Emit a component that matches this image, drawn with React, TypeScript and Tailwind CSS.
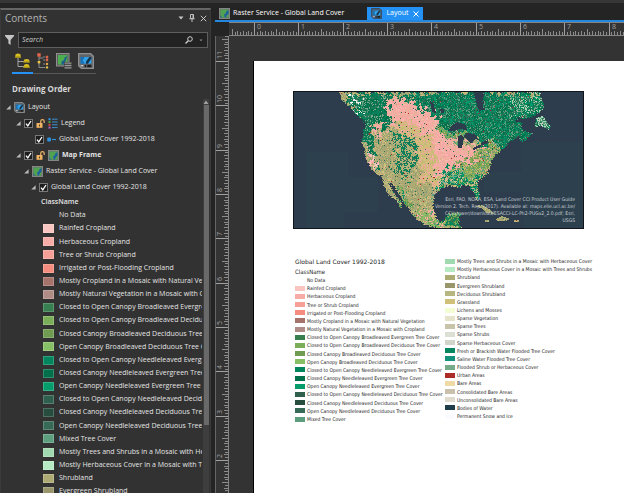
import { useMemo, type ReactNode } from "react";

type Pt = [number, number];
type Zone = { shape: Pt[]; colors: string[] };

/* ---------- land cover classes ---------- */

const classes: { name: string; swatch: string }[] = [
  { name: "No Data", swatch: "" },
  { name: "Rainfed Cropland", swatch: "bg-[#f9c5c1]" },
  { name: "Herbaceous Cropland", swatch: "bg-[#f7aca7]" },
  { name: "Tree or Shrub Cropland", swatch: "bg-[#f69f97]" },
  { name: "Irrigated or Post-Flooding Cropland", swatch: "bg-[#f48c7f]" },
  { name: "Mostly Cropland in a Mosaic with Natural Vegetation", swatch: "bg-[#a5736b]" },
  { name: "Mostly Natural Vegetation in a Mosaic with Cropland", swatch: "bg-[#b08c86]" },
  { name: "Closed to Open Canopy Broadleaved Evergreen Tree Cover", swatch: "bg-[#377e50]" },
  { name: "Closed to Open Canopy Broadleaved Deciduous Tree Cover", swatch: "bg-[#7bae58]" },
  { name: "Closed Canopy Broadleaved Deciduous Tree Cover", swatch: "bg-[#6f9c51]" },
  { name: "Open Canopy Broadleaved Deciduous Tree Cover", swatch: "bg-[#87bf67]" },
  { name: "Closed to Open Canopy Needleleaved Evergreen Tree Cover", swatch: "bg-[#03865d]" },
  { name: "Closed Canopy Needleleaved Evergreen Tree Cover", swatch: "bg-[#03704c]" },
  { name: "Open Canopy Needleleaved Evergreen Tree Cover", swatch: "bg-[#059c6c]" },
  { name: "Closed to Open Canopy Needleleaved Deciduous Tree Cover", swatch: "bg-[#2f604e]" },
  { name: "Closed Canopy Needleleaved Deciduous Tree Cover", swatch: "bg-[#264d3e]" },
  { name: "Open Canopy Needleleaved Deciduous Tree Cover", swatch: "bg-[#376b58]" },
  { name: "Mixed Tree Cover", swatch: "bg-[#5d9e7e]" },
  { name: "Mostly Trees and Shrubs in a Mosaic with Herbaceous Cover", swatch: "bg-[#a0d8b0]" },
  { name: "Mostly Herbaceous Cover in a Mosaic with Trees and Shrubs", swatch: "bg-[#b5eac3]" },
  { name: "Shrubland", swatch: "bg-[#adab74]" },
  { name: "Evergreen Shrubland", swatch: "bg-[#98966a]" },
  { name: "Deciduous Shrubland", swatch: "bg-[#b7b680]" },
  { name: "Grassland", swatch: "bg-[#d1c079]" },
  { name: "Lichens and Mosses", swatch: "bg-[#f3fdd3]" },
  { name: "Sparse Vegetation", swatch: "bg-[#e6e3cb]" },
  { name: "Sparse Trees", swatch: "bg-[#c8c4aa]" },
  { name: "Sparse Shrubs", swatch: "bg-[#dce0d4]" },
  { name: "Sparse Herbaceous Cover", swatch: "bg-[#d2d6ca]" },
  { name: "Fresh or Brackish Water Flooded Tree Cover", swatch: "bg-[#07865f]" },
  { name: "Saline Water Flooded Tree Cover", swatch: "bg-[#15927c]" },
  { name: "Flooded Shrub or Herbaceous Cover", swatch: "bg-[#77aa89]" },
  { name: "Urban Areas", swatch: "bg-[#ad2c28]" },
  { name: "Bare Areas", swatch: "bg-[#efd9a5]" },
  { name: "Consolidated Bare Areas", swatch: "bg-[#c9c1ae]" },
  { name: "Unconsolidated Bare Areas", swatch: "bg-[#dfdccf]" },
  { name: "Bodies of Water", swatch: "bg-[#1f3c4b]" },
  { name: "Permanent Snow and Ice", swatch: "bg-[#fafaff]" },
];

/* ---------- map drawing ---------- */

const mainland: Pt[] = [
  [45, 0], [47, 7], [55, 14], [63, 24], [72, 31], [69, 41], [68, 50], [70, 57], [72, 67], [79, 80], [87, 84],
  [90, 92], [95, 104], [101, 107], [107, 116], [108, 112], [102, 104], [98, 96], [94, 90], [97, 91], [103, 99],
  [110, 111], [118, 121], [120, 125], [128, 131], [138, 135], [150, 137], [167, 138], [167, 133], [164, 132],
  [167, 123], [164, 120], [154, 122], [149, 130], [143, 128], [139, 117], [140, 104], [146, 97], [155, 93], [165, 96],
  [170, 93], [175, 94], [179, 100], [183, 109], [186, 106], [184, 97], [184, 89], [194, 81], [197, 72],
  [200, 64], [210, 56], [217, 49], [225, 44], [226, 49], [232, 48], [239, 41], [232, 40], [227, 36], [228, 31],
  [220, 29], [224, 26], [232, 27], [242, 23], [249, 17], [250, 11], [245, 0], [190, 0], [189, 9], [190, 17],
  [185, 20], [182, 12], [180, 0],
];

const islands: Pt[][] = [
  [[242, 26], [249, 24], [253, 30], [257, 34], [255, 38], [247, 34], [241, 35]],
  [[181, 114], [188, 113], [195, 117], [201, 122], [193, 121], [187, 116]],
  [[202, 127], [208, 124], [216, 127], [212, 129], [203, 129]],
  [[191, 128], [195, 128], [195, 130], [191, 130]],
  [[220, 128], [225, 128], [225, 130], [220, 130]],
];

const lakes: Pt[][] = [
  [[154, 39], [158, 33], [164, 30], [172, 33], [173, 38], [165, 37], [160, 39]],
  [[164, 44], [168, 43], [170, 46], [168, 56], [164, 56]],
  [[173, 41], [181, 42], [185, 48], [181, 47], [177, 52], [174, 48], [170, 44]],
  [[178, 57], [183, 54], [188, 52], [187, 55], [180, 58]],
  [[187, 51], [194, 48], [195, 51], [189, 53]],
  [[136, 9], [139, 10], [142, 21], [138, 20]],
  [[146, 17], [150, 17], [150, 21], [147, 21]],
];

const baseColors = ["#aeab74", "#a9a671", "#aeab74", "#a3a06d", "#b7b680", "#d1c079", "#b9a878", "#8aa074"];

const zones: Zone[] = [
  { shape: [[45, 0], [100, 0], [92, 8], [100, 32], [92, 38], [82, 32], [78, 56], [86, 76], [82, 80], [74, 62], [66, 40], [62, 22]], colors: ["#03704c", "#03865d", "#0e7a58", "#2f7a5c", "#77aa89", "#03704c"] },
  { shape: [[55, 3], [60, 3], [75, 20], [72, 23], [62, 14]], colors: ["#03704c", "#ffffff", "#dfe9e0", "#03865d", "#5d9e7e"] },
  { shape: [[72, 60], [76, 60], [84, 75], [80, 80], [74, 70]], colors: ["#f7aca7", "#f9c5c1"] },
  { shape: [[78, 33], [86, 30], [92, 38], [84, 44], [78, 42]], colors: ["#f7aca7", "#d8b792", "#f7aca7", "#aeab74"] },
  { shape: [[100, 40], [120, 38], [122, 70], [114, 86], [98, 78], [104, 62], [98, 50]], colors: ["#03865d", "#aeab74", "#2f7a5c", "#b7b680", "#aeab74", "#0e7a58"] },
  { shape: [[98, 88], [106, 92], [120, 114], [118, 122], [108, 110]], colors: ["#6f9c51", "#7bae58", "#0f8c68", "#aeab74"] },
  { shape: [[118, 118], [136, 118], [146, 132], [168, 138], [138, 137]], colors: ["#7bae58", "#f7aca7", "#aeab74", "#87bf67"] },
  { shape: [[140, 120], [170, 114], [170, 138], [148, 138]], colors: ["#377e50", "#03865d", "#7bae58"] },
  { shape: [[102, 0], [260, 0], [260, 50], [200, 62], [180, 46], [152, 46], [144, 28], [120, 10], [102, 5]], colors: ["#03704c", "#03865d", "#0b7c58", "#059c6c", "#2f6f57", "#03704c", "#5d9e7e"] },
  { shape: [[212, 2], [250, 0], [250, 22], [220, 24]], colors: ["#03704c", "#059c6c", "#a9cfae", "#2f7a5c", "#77aa89", "#03865d"] },
  { shape: [[240, 22], [260, 22], [260, 40], [240, 38]], colors: ["#5d9e7e", "#b9d3bb", "#2f7a5c", "#a0d8b0"] },
  { shape: [[144, 32], [156, 40], [172, 38], [178, 48], [150, 50], [144, 42]], colors: ["#7bae58", "#6f9c51", "#d1a58b", "#5d9e7e"] },
  { shape: [[168, 58], [196, 50], [208, 54], [200, 66], [196, 80], [184, 90], [144, 96], [142, 76], [160, 70]], colors: ["#7bae58", "#6f9c51", "#aeb465", "#87a857", "#5d9e7e", "#d6ac85"] },
  { shape: [[142, 78], [160, 74], [176, 84], [188, 82], [186, 110], [170, 95], [142, 96]], colors: ["#059c6c", "#03865d", "#77aa89", "#d8b792", "#7bae58", "#0e7a58"] },
  { shape: [[92, 6], [104, 5], [122, 12], [142, 25], [146, 40], [154, 47], [166, 49], [178, 56], [196, 50], [180, 62], [170, 70], [158, 73], [148, 78], [144, 92], [128, 86], [126, 66], [122, 48], [106, 38], [97, 28]], colors: ["#f7aca7", "#f7aca7", "#f3a59e", "#f9b9b3", "#f7aca7", "#e3b294"] },
  { shape: [[100, 33], [108, 30], [124, 34], [140, 50], [141, 76], [144, 94], [128, 90], [122, 70], [121, 48]], colors: ["#d1c079", "#d8b37f", "#f0aba0", "#c6b877"] },
  { shape: [[137, 102], [142, 100], [142, 118], [148, 129], [142, 131], [136, 118]], colors: ["#f7aca7", "#d1c079", "#aeab74", "#5d9e7e"] },
];

function inside(x: number, y: number, shape: Pt[]) {
  let hit = false;
  for (let i = 0, j = shape.length - 1; i < shape.length; j = i++) {
    const [xi, yi] = shape[i];
    const [xj, yj] = shape[j];
    if (yi > y !== yj > y && x < ((xj - xi) * (y - yi)) / (yj - yi) + xi) hit = !hit;
  }
  return hit;
}

function hash(x: number, y: number, seed = 0) {
  let h = Math.imul(x + 374, 668265263) ^ Math.imul(y + 91, 2246822519) ^ Math.imul(seed + 7, 3266489917);
  h = Math.imul(h ^ (h >>> 13), 1274126177);
  return ((h ^ (h >>> 16)) >>> 0) / 4294967296;
}

function clump(x: number, y: number, size: number, seed: number) {
  const gx = Math.floor(x / size);
  const gy = Math.floor(y / size);
  const fx = x / size - gx;
  const fy = y / size - gy;
  const top = hash(gx, gy, seed) * (1 - fx) + hash(gx + 1, gy, seed) * fx;
  const low = hash(gx, gy + 1, seed) * (1 - fx) + hash(gx + 1, gy + 1, seed) * fx;
  return top * (1 - fy) + low * fy;
}

function buildRaster(width: number, height: number) {
  const cells = new Map<string, string>();
  for (let y = 0; y < height; y++) {
    for (let x = 0; x < width; x++) {
      const wx = x + 0.5 + (hash(x, y, 1) - 0.5) * 2;
      const wy = y + 0.5 + (hash(x, y, 2) - 0.5) * 2;
      const land = inside(wx, wy, mainland) || islands.some((s) => inside(x + 0.5, y + 0.5, s));
      if (!land || lakes.some((s) => inside(x + 0.5, y + 0.5, s))) continue;
      const zx = x + (clump(x, y, 3, 3) - 0.5) * 14 + (hash(x, y, 9) - 0.5) * 3;
      const zy = y + (clump(x, y, 3, 4) - 0.5) * 14 + (hash(x, y, 10) - 0.5) * 3;
      let colors = baseColors;
      for (const zone of zones) if (inside(zx, zy, zone.shape)) colors = zone.colors;
      const mix = (clump(x, y, 3, 5) * 1.6 + hash(x, y, 6) * 0.4) % 1;
      let color = colors[Math.floor(mix * colors.length)];
      const speck = hash(x, y, 8);
      if (speck > 0.996) color = "#ad2c28";
      else if (speck > 0.975) color = "#3b6a57";
      cells.set(color, (cells.get(color) ?? "") + `M${x} ${y}h1v1h-1z`);
    }
  }
  return [...cells];
}

function LandCoverMap() {
  const raster = useMemo(() => buildRaster(289, 136), []);
  return (
    <svg viewBox="0 0 289 136" className="block w-full" role="img" aria-label="Land cover of North America">
      <rect width="289" height="136" fill="#2d3d4e" />
      <path d="M12 60h42v25h30v35H50v17H12z M226 50h64v85h-60z M190 80h40v20h-40z" fill="#2b434e" opacity="0.6" />
      {raster.map(([color, d]) => (
        <path key={color} d={d} fill={color} shapeRendering="crispEdges" />
      ))}
    </svg>
  );
}

/* ---------- icons ---------- */

function Caret() {
  return (
    <svg viewBox="0 0 5 5" className="size-[5px] shrink-0">
      <path d="M4.6 0.2V4.6H0.2z" fill="#b9b9b9" />
    </svg>
  );
}

function LayoutIcon({ className = "size-[11px]", active = false }: { className?: string; active?: boolean }) {
  return (
    <svg viewBox="0 0 12 12" className={className + " shrink-0"}>
      <path d="M0.5 0.5H9.5L11.5 2.5V11.5H2.5L0.5 9.5z" fill={active ? "#47617a" : "#5f6468"} stroke={active ? "#3a4a5a" : "#8f8f8f"} />
      <path d="M2 3h8v5H2z" fill="#2fa0ea" />
      <path d="M2 3h3L3.5 5.5 5 8H2z" fill="#1b6fb0" />
      <path d="M8.6 3L6 6.4V8h1.4L10 4.2V3z" fill="#16334a" />
      <path d="M5 9h1.2v1.6H5zM7 8.8h3v1.8H7z" fill="#1c1c1c" />
      <path d="M2 9h2v1H2z" fill="#cfcfcf" />
    </svg>
  );
}

function MapIcon({ className = "size-[11px]" }: { className?: string }) {
  return (
    <svg viewBox="0 0 12 12" className={className + " shrink-0"}>
      <rect x="0.5" y="0.5" width="11" height="11" fill="#6d6d6d" stroke="#8b8b8b" />
      <rect x="1.6" y="1.6" width="8.8" height="8.8" fill="#4fa351" />
      <path d="M10.4 2.4L8.2 3.2 7.6 5.4 5.6 7 6.2 10.4H7.6L8.6 7.6 10.4 6.2z" fill="#1e5fa0" />
      <path d="M1.6 10.4V7.6L3.4 10.4z" fill="#1e5fa0" />
    </svg>
  );
}

function LockIcon() {
  return (
    <svg viewBox="0 0 9 9" className="size-[9px] shrink-0" fill="none">
      <path d="M4.7 4V2.4a1.7 1.7 0 0 1 3.5 0V4" stroke="#f0b264" strokeWidth="1.2" />
      <rect x="0.5" y="4" width="6" height="4.8" fill="#f0b264" />
      <rect x="3" y="5.6" width="1" height="1.8" fill="#4a3a20" />
    </svg>
  );
}

function LegendIcon() {
  return (
    <svg viewBox="0 0 10 11" className="h-[11px] w-[10px] shrink-0">
      <rect x="0.5" y="0.2" width="2" height="2" fill="#2f9be8" />
      <rect x="0.5" y="3" width="2" height="2" fill="#43a047" />
      <rect x="0.5" y="5.8" width="2" height="2" fill="#e0483c" />
      <rect x="0.5" y="8.6" width="2" height="2" fill="#b25ccf" />
      <path d="M4 1.2h5.6M4 4h5.6M4 6.8h5.6M4 9.6h5.6" stroke="#3d8fd0" strokeWidth="1" />
    </svg>
  );
}

function LegendItemIcon() {
  return (
    <svg viewBox="0 0 9 5" className="h-[5px] w-[9px] shrink-0">
      <rect x="0.2" y="0.6" width="3.8" height="3.8" rx="1" fill="#2f8fd8" />
      <path d="M5 2.5h4" stroke="#2f8fd8" strokeWidth="1.2" />
    </svg>
  );
}

function DrawingOrderIcon() {
  return (
    <svg viewBox="0 0 16 16" className="size-4" fill="none">
      <path d="M3 5v8.5h6M3 8.5h6" stroke="#a5a5a5" />
      <path d="M0.6 1.2q2.4-1.6 4.8 0l.6 3.6H0zM9.2 6.6q2.4-1.4 4.8 0l.8 3H8.4zM9.2 11.8q2.4-1.4 4.8 0l.8 3.2H8.4z" fill="#d5bd22" />
      <path d="M0 4h6M8.5 9h6.3M8.5 14.3h6.3" stroke="#8d7b10" strokeWidth="0.8" />
    </svg>
  );
}

function SourceIcon() {
  return (
    <svg viewBox="0 0 12 16" className="h-4 w-3" fill="none">
      <path d="M2 4v3M2 10v4.5h4M2 5h4" stroke="#8b8b8b" />
      <path d="M0.3 0.3h3.4v3.4H0.3zM8.8 2.8h2.4v2.4H8.8zM8.8 5.8h2.4v2.4H8.8z" fill="#e0664a" />
      <path d="M6 4h2M6 7h2M6 11h2M6 14.5h2" stroke="#8b8b8b" />
      <circle cx="2" cy="9" r="1.5" fill="#e9c64a" />
      <circle cx="10" cy="11" r="1.2" fill="#e9a84a" />
      <circle cx="10" cy="14.4" r="1.2" fill="#e9c64a" />
    </svg>
  );
}

function MapListIcon() {
  return (
    <svg viewBox="0 0 16 16" className="size-4">
      <rect x="0.5" y="0.5" width="12.5" height="12.5" fill="#5f5f5f" stroke="#8f8f8f" />
      <rect x="2" y="2" width="9.5" height="9.5" fill="#4cae4f" />
      <path d="M11.5 3L8.6 4.5 8 7 5.5 8.5V11.5H9L9.5 8z" fill="#1d5f8d" />
      <path d="M8 9h8v7H8z" fill="#323232" />
      <path d="M8.5 10.2h7M8.5 12.5h7M8.5 14.8h7" stroke="#9a9a9a" strokeWidth="1.3" />
    </svg>
  );
}

/* ---------- rulers ---------- */

const inch = 133 / 3;

function TopRuler() {
  const ticks = Array.from({ length: 160 }, (_, i) => i - 8).map((i) => ({ x: 25 + (i * inch) / 16, i }));
  return (
    <svg className="block h-3 w-full bg-[#343434]" aria-hidden="true">
      {ticks.map(({ x, i }) =>
        i % 16 === 0 ? (
          <g key={i}>
            <rect x={Math.round(x)} y="0" width="1" height="12" fill="#a0a0a0" />
            <text x={Math.round(x) + 3} y="6" className="fill-[#a0a0a0] font-['Open_Sans',sans-serif] text-[7px]">{i / 16}</text>
          </g>
        ) : (
          <rect key={i} x={Math.round(x)} y={i % 8 === 0 ? 6 : i % 2 === 0 ? 8 : 9} width="1" height="6" fill="#8c8c8c" />
        ),
      )}
    </svg>
  );
}

function SideRuler() {
  const ticks = Array.from({ length: 180 }, (_, i) => i - 9).map((i) => ({ y: 25 + (i * inch) / 16, i }));
  return (
    <svg className="w-3 shrink-0 bg-[#343434]" aria-hidden="true">
      {ticks.map(({ y, i }) =>
        i % 16 === 0 ? (
          <g key={i}>
            <rect x="0" y={Math.round(y)} width="12" height="1" fill="#a0a0a0" />
            <text transform={`translate(6 ${Math.round(y) - 2}) rotate(-90)`} className="fill-[#a0a0a0] font-['Open_Sans',sans-serif] text-[7px]">
              {11 - i / 16}
            </text>
          </g>
        ) : (
          <rect key={i} x={i % 8 === 0 ? 6 : i % 2 === 0 ? 8 : 9} y={Math.round(y)} width="6" height="1" fill="#8c8c8c" />
        ),
      )}
    </svg>
  );
}

/* ---------- contents pane ---------- */

function Check({ label }: { label: string }) {
  return (
    <span className="relative flex size-[9px] shrink-0">
      <input
        type="checkbox"
        defaultChecked
        aria-label={label}
        className="peer size-[9px] appearance-none border border-[#777] bg-[#1e1e1e]"
      />
      <svg viewBox="0 0 9 9" className="pointer-events-none absolute inset-0 hidden size-[9px] peer-checked:block" fill="none">
        <path d="M2 4.6L3.8 6.8 7 2" stroke="#fff" strokeWidth="1.3" />
      </svg>
    </span>
  );
}

function TreeRow({ indent, children }: { indent: string; children: ReactNode }) {
  return <li className={"flex h-4 items-center gap-[3px] whitespace-nowrap " + indent}>{children}</li>;
}

function ContentsPane() {
  return (
    <aside className="flex w-[211px] shrink-0 flex-col overflow-hidden border-x border-t-2 border-[#3a3a3a] border-t-[#666] bg-[#323232]">
      <header className="flex h-4 items-center gap-[5px] pr-[3px] pl-1">
        <h1 className="flex-1 text-[10px] leading-4 text-[#b4b4b4]">Contents</h1>
        <button aria-label="Pane options">
          <svg viewBox="0 0 6 4" className="h-1 w-[6px]"><path d="M0.5 0.5h5L3 3.5z" fill="#c8c8c8" /></svg>
        </button>
        <button aria-label="Pin">
          <svg viewBox="0 0 6 8" className="h-2 w-[6px]" fill="none" stroke="#c0c0c0"><path d="M1.5 0.5h3v4h-3zM0.3 4.8h5.4M3 5v3M4 0.5v4" /></svg>
        </button>
        <button aria-label="Close pane">
          <svg viewBox="0 0 7 7" className="size-[7px]" stroke="#c8c8c8"><path d="M0.8 0.8l5.4 5.4M6.2 0.8l-5.4 5.4" /></svg>
        </button>
      </header>

      <div className="mt-[6px] flex items-center gap-1 pr-[2px] pl-1">
        <svg viewBox="0 0 9 10" className="h-[10px] w-[9px] shrink-0"><path d="M0 0h9v1L5.6 5v5L3.4 8.5V5L0 1z" fill="#c4c4c4" /></svg>
        <div className="flex h-4 flex-1 items-center border border-[#5e5e5e] bg-[#222] pr-1 pl-[3px]">
          <input
            type="search"
            aria-label="Search"
            placeholder="Search"
            className="min-w-0 flex-1 bg-transparent text-[7px] italic outline-none placeholder:text-[#d0d0d0]"
          />
          <button aria-label="Run search" className="mr-[6px]">
            <svg viewBox="0 0 8 8" className="size-2" fill="none" stroke="#cfcfcf"><circle cx="5" cy="3" r="2.3" /><path d="M3.3 4.7L0.5 7.5" strokeWidth="1.3" /></svg>
          </button>
          <button aria-label="Search options">
            <svg viewBox="0 0 4 3" className="h-[3px] w-1"><path d="M0.5 0.5h3L2 2.2z" fill="#909090" /></svg>
          </button>
        </div>
      </div>

      <div className="mt-[5px] ml-[11px] flex w-[84px] justify-between border-b border-[#585858] pr-[2px] pb-1 pl-[3px]">
        <button aria-label="List by drawing order" className="relative">
          <DrawingOrderIcon />
          <span className="absolute -bottom-[5px] -left-[3px] h-[2px] w-[21px] bg-[#2492f5]" />
        </button>
        <button aria-label="List by data source"><SourceIcon /></button>
        <button aria-label="List by map frames"><MapListIcon /></button>
        <button aria-label="List by element type"><LayoutIcon className="size-4" /></button>
      </div>

      <h2 className="mt-[9px] ml-[11px] text-[8px] leading-3 font-bold text-[#d8d8d8]">Drawing Order</h2>

      <div className="mt-1 flex min-h-0 flex-1">
        <ul className="min-w-0 flex-1 overflow-hidden text-[7px] text-[#e4e4e4]">
          <TreeRow indent="pl-[5px]"><Caret /><LayoutIcon />Layout</TreeRow>
          <TreeRow indent="pl-[15px]"><Caret /><Check label="Legend" /><LockIcon /><LegendIcon />Legend</TreeRow>
          <TreeRow indent="pl-[34px]"><Check label="Legend item" /><LegendItemIcon />Global Land Cover 1992-2018</TreeRow>
          <TreeRow indent="pl-[15px]"><Caret /><Check label="Map Frame" /><LockIcon /><MapIcon /><b>Map Frame</b></TreeRow>
          <TreeRow indent="pl-[23px]"><Caret /><MapIcon />Raster Service - Global Land Cover</TreeRow>
          <TreeRow indent="pl-[30px]"><Caret /><Check label="Global Land Cover 1992-2018" />Global Land Cover 1992-2018</TreeRow>
          <li className="h-[14px] pl-10 leading-[13px] font-semibold">ClassName</li>
          <li>
            <ul className="flex h-[289px] flex-col">
              {classes.slice(0, 22).map((c) => (
                <li key={c.name} className="flex flex-1 items-center gap-[5px] pl-[42px] whitespace-nowrap">
                  <span className={"h-[9px] w-[11px] shrink-0 " + (c.swatch && "border border-white/20 ") + c.swatch} />
                  {c.name}
                </li>
              ))}
            </ul>
          </li>
        </ul>
        <div className="mx-[1px] flex w-[6px] flex-col items-center bg-[#3e3e3e]">
          <svg viewBox="0 0 6 6" className="size-[6px] shrink-0"><path d="M3 1.5L5.5 5h-5z" fill="#a0a0a0" /></svg>
          <div className="h-[320px] w-[5px] shrink-0 bg-[#696969]" />
        </div>
      </div>
    </aside>
  );
}

/* ---------- layout view ---------- */

function LegendColumn({ items, size }: { items: typeof classes; size: string }) {
  return (
    <ul className={"flex flex-col " + size}>
      {items.map((c) => (
        <li key={c.name} className="flex min-h-0 flex-1 items-center gap-[2px] whitespace-nowrap">
          <span className={"h-[5px] w-[10px] shrink-0 " + c.swatch} />
          {c.name}
        </li>
      ))}
    </ul>
  );
}

function LayoutPage() {
  return (
    <article className="ml-6 flex-1 border-l border-black bg-white pt-[30px] pl-[39px] text-[#1c1c1c]">
      <div className="relative w-[291px] border border-[#10151c]">
        <LandCoverMap />
        <p className="absolute right-2 bottom-1 text-right font-['DejaVu_Sans_Condensed',sans-serif] text-[5px] leading-[7px] whitespace-nowrap text-[#c9cdd2]">
          Esri, FAO, NOAA, ESA, Land Cover CCI Product User Guide
          <br />
          Version 2. Tech. Rep. (2017). Available at: maps.elie.ucl.ac.be/
          <br />
          CCI/viewer/download/ESACCI-LC-Ph2-PUGv2_2.0.pdf; Esri,
          <br />
          USGS
        </p>
      </div>
      <div className="mt-7 flex items-start gap-[5px] pl-[2px] font-['DejaVu_Sans_Condensed',sans-serif] text-[5px] leading-[8px]">
        <section className="w-[145px]">
          <h2 className="h-[10px] font-['DejaVu_Sans',sans-serif] text-[6px] leading-[10px]">Global Land Cover 1992-2018</h2>
          <h3 className="h-[9px] text-[6px] leading-[9px]">ClassName</h3>
          <LegendColumn items={classes.slice(0, 18)} size="h-[147px]" />
        </section>
        <section>
          <LegendColumn items={classes.slice(18)} size="h-[163px]" />
        </section>
      </div>
    </article>
  );
}

export default function App() {
  return (
    <div className="flex h-screen flex-col overflow-hidden bg-[#242424] font-['Open_Sans','Noto_Sans',sans-serif]">
      <div className="h-[3px] shrink-0 bg-[#363636]" />
      <div className="flex min-h-0 flex-1 gap-1">
        <div className="flex pt-[5px]"><ContentsPane /></div>
        <main className="flex min-w-0 flex-1 flex-col">
          <nav className="flex h-[17px] shrink-0 items-end gap-[23px] pl-1 text-[7px] text-white">
            <button className="flex h-[13px] items-center gap-[3px] whitespace-nowrap"><MapIcon />Raster Service - Global Land Cover</button>
            <div className="flex h-[13px] items-center gap-[5px] bg-[#2492f5] px-1 text-white">
              <button className="flex items-center gap-1"><LayoutIcon active />Layout</button>
              <button aria-label="Close Layout">
                <svg viewBox="0 0 6 6" className="size-[6px]" stroke="#fff"><path d="M0.5 0.5l5 5M5.5 0.5l-5 5" /></svg>
              </button>
            </div>
          </nav>
          <div className="h-[2px] shrink-0 bg-[#2387e0]" />
          <div className="ml-[14px] shrink-0 border-y border-[#858585]"><TopRuler /></div>
          <div className="flex min-h-0 flex-1 border-l border-[#666] bg-[#333]">
            <SideRuler />
            <div className="flex min-w-0 flex-1 flex-col border-l border-[#858585] pt-[25px]"><LayoutPage /></div>
          </div>
        </main>
      </div>
    </div>
  );
}
